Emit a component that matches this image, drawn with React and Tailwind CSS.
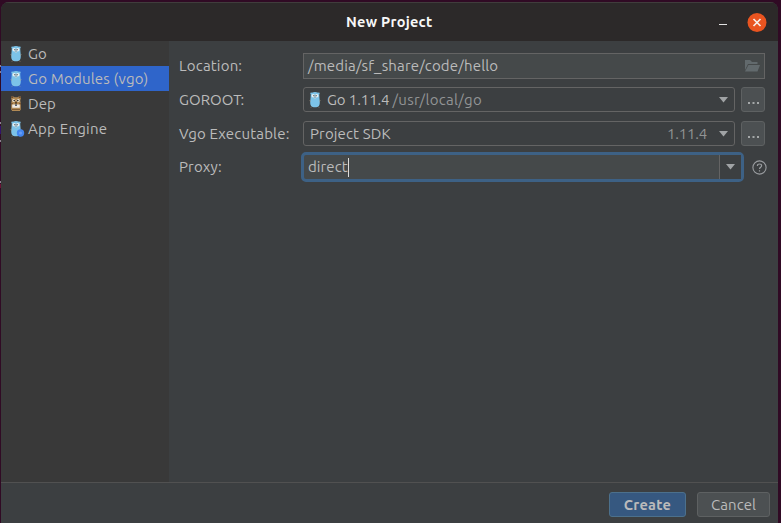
const FONT = "font-['Ubuntu','Noto_Sans',sans-serif]";

function Gopher({ badge = false }) {
  return (
    <svg width="12" height="16" viewBox="0 0 12 16" className="block shrink-0 overflow-visible">
      <path d="M.3 1.300C.3.5 1 .2 1.800.7 2.700.2 4 0 5 0s2.300.2 3.200.7C9 .2 9.700.5 9.700 1.300c0 .5-.3.8-.5 1.200.2 2 .2 4 .5 6 .2 2 .1 4-.7 5.300C8.300 15 6.700 15.300 5 15.300S1.700 15 1 13.800C.2 12.500.1 10.500.3 8.500c.3-2 .3-4 .5-6C.6 2.100.3 1.800.3 1.300Z" fill="#7cc3e8" />
      <path d="M.6 9.200-.3 8.700M9.400 9.200l.9-.5M1.700 14.800l-.6.6M8.300 14.800l.6.6" stroke="#b9a48b" strokeWidth=".9" />
      <circle cx="3.200" cy="3.700" r="1.700" fill="#e9eff1" />
      <circle cx="6.800" cy="3.700" r="1.700" fill="#e9eff1" />
      <circle cx="3.900" cy="3.700" r=".65" fill="#34434b" />
      <circle cx="6.100" cy="3.700" r=".65" fill="#34434b" />
      <path d="M4.300 5.300h1.400v1.100H4.300Z" fill="#d9d6cc" />
      <ellipse cx="5" cy="5" rx=".7" ry=".4" fill="#52606a" />
      {badge && <circle cx="9.500" cy="12" r="3.700" fill="#4285ee" />}
      {badge && <circle cx="9.500" cy="12" r="1.600" fill="#689df5" />}
    </svg>
  );
}

function DepIcon() {
  return (
    <svg width="12" height="16" viewBox="0 0 12 16" className="block shrink-0 overflow-visible">
      <path d="M.2.5h2l1.300.7h3L7.800.5h2v2l-.5 2 .5 3v6l-1 1.500H1.200l-1-1.500v-6l.5-3-.5-2Z" fill="#b18a55" />
      <path d="M.2.500h2v1.500h-2ZM7.800.500h2v1.500h-2ZM.2 7h1.500v1.500H.2ZM8.300 7h1.500v1.500H8.300ZM1 13h8v.8H1Z" fill="#6f4d2d" />
      <circle cx="2.800" cy="4.500" r="1.500" fill="#eee7d8" />
      <circle cx="7.200" cy="4.500" r="1.500" fill="#eee7d8" />
      <circle cx="3.200" cy="4.600" r=".8" fill="#282420" />
      <circle cx="6.800" cy="4.600" r=".8" fill="#282420" />
      <path d="M4.200 5.800h1.600v2H4.200Z" fill="#45331f" />
      <path d="M1.200 8.500h7.600v3.200H1.200Z" fill="#eeeae4" />
      <path d="M4 8.200h2v1.800H4Z" fill="#59616b" />
    </svg>
  );
}

function Arrow() {
  return (
    <svg width="9" height="6" viewBox="0 0 9 6" className="block shrink-0">
      <path d="M0 0h9L4.500 5.500Z" fill="#a0a3a5" />
    </svg>
  );
}

function SidebarItem({ icon, label, spacing, selected }) {
  return (
    <li className={`flex h-[25.2px] items-center pl-2.5 ${selected ? "bg-[#2f65ca]" : ""}`}>
      {icon}
      <span className={`ml-[5px] ${spacing}`}>{label}</span>
    </li>
  );
}

function MoreButton() {
  return (
    <button className="ml-1.5 flex h-[25px] w-6 items-center justify-center rounded-[3px] border border-[#5e6162] bg-[#4c5052]">
      <svg width="11" height="2" viewBox="0 0 11 2" className="mt-[7px]">
        <path d="M0 0h2v2H0ZM4.500 0h2v2h-2ZM9 0h2v2H9Z" fill="#a5a8a9" />
      </svg>
    </button>
  );
}

export default function App() {
  return (
    <div className={`flex h-[523px] w-[781px] overflow-hidden bg-[#300a24] ${FONT} text-[15px] leading-5 whitespace-nowrap text-[#bbbbbb]`}>
      <div className="flex w-px flex-col">
        <i className="mt-[65px] h-[2px] bg-[#8d8090]" />
        <i className="mt-1 h-[2px] bg-[#8d8090]" />
        <i className="mt-[49px] h-[2px] bg-[#8d8090]" />
        <i className="mt-[2px] h-2 bg-[#32116c]" />
        <i className="mt-[6px] h-[2px] bg-[#8d8090]" />
        <i className="mt-[39px] h-[2px] bg-[#8d8090]" />
        <i className="mt-px h-1 bg-[#6c1235]" />
      </div>
      <div className="mt-[2px] flex w-[777px] flex-col overflow-hidden rounded-t-[8px] bg-[#3c3f41]">
        <header className="flex h-[39px] shrink-0 items-center border-t border-[#403d3c] bg-[#2c2929] text-[#f7f7f7]">
          <h1 className="ml-[345px] w-[86px] text-[14.5px] font-bold tracking-[0.28px]">New Project</h1>
          <div className="mt-[4px] ml-[287px] h-px w-2 bg-[#e2e2e2]" />
          <button className="mt-px ml-[20px]">
            <svg width="20" height="20" viewBox="0 0 20 20" className="block">
              <circle cx="10" cy="9.500" r="9.500" fill="#e95420" />
              <path d="m6.500 6 7 7m0-7-7 7" stroke="#f8eee9" strokeWidth="1.700" />
            </svg>
          </button>
        </header>
        <div className="flex h-[441px] shrink-0">
          <ul className="w-[168px] bg-[#393939]">
            <SidebarItem icon={<Gopher />} label="Go" spacing="tracking-[0.1px]" />
            <SidebarItem icon={<Gopher />} label="Go Modules (vgo)" spacing="tracking-[0.19px]" selected />
            <SidebarItem icon={<DepIcon />} label="Dep" spacing="tracking-[0.1px]" />
            <SidebarItem icon={<Gopher badge />} label="App Engine" spacing="tracking-[0.25px]" />
          </ul>
          <main className="flex-1 pt-3 pl-2.5">
            <div className="mb-2 flex h-[26px] items-center">
              <label className="w-[124px] tracking-[0.18px]">Location:</label>
              <div className="flex h-full w-[462px] items-center border border-[#646464] bg-[#45494a] pl-1">
                <span className="tracking-[0.17px]">/media/sf_share/code/hello</span>
                <svg width="15" height="12" viewBox="0 0 15 12" className="mr-[4px] ml-auto">
                  <path d="M0 0h5l2 2h5.500v2H3L0 10Z" fill="#626a6d" />
                  <path d="M3.400 5H15l-2.500 6.500H0Z" fill="#626a6d" />
                </svg>
              </div>
            </div>
            <div className="mb-[9px] flex h-[25px] items-center">
              <label className="w-[124px] tracking-[0.05px]">GOROOT:</label>
              <div className="flex h-full w-[432px] items-center rounded-[3px] border border-[#646464] pr-[6px] pl-1.5">
                <Gopher />
                <span className="ml-[5px] tracking-[-0.1px]">Go 1.11.4</span>
                <span className="ml-[3px] tracking-[0.33px] text-[#929495]">/usr/local/go</span>
                <span className="ml-auto"><Arrow /></span>
              </div>
              <MoreButton />
            </div>
            <div className="mb-1.5 flex h-[25px] items-center">
              <label className="w-[124px] tracking-[0.18px]">Vgo Executable:</label>
              <div className="flex h-full w-[432px] items-center rounded-[3px] border border-[#646464] pr-[6px] pl-1.5">
                <span className="tracking-[0.13px]">Project SDK</span>
                <span className="mr-[12px] ml-auto tracking-[-0.2px] text-[#929495]">1.11.4</span>
                <Arrow />
              </div>
              <MoreButton />
            </div>
            <div className="flex h-[30px] items-center">
              <label className="w-[122px] tracking-[0.15px]">Proxy:</label>
              <div className="flex h-full w-[443px] rounded-[5px] border-[3px] border-[#3d6185] bg-[#45494a]">
                <div className="flex w-[415px] items-center pl-1">
                  <span className="tracking-[0.08px]">direct</span>
                  <i className="h-[19px] w-px bg-[#dddddd]" />
                </div>
                <div className="flex flex-1 items-center justify-center border-l border-[#646464] bg-[#3c3f41]"><Arrow /></div>
              </div>
              <svg width="15" height="15" viewBox="0 0 15 15" className="ml-2 block" fill="none" stroke="#9a9da0">
                <circle cx="7.500" cy="7.500" r="6.600" strokeWidth="1.100" />
                <path d="M5.400 6c0-1.300.8-2 2.100-2s2.100.7 2.100 1.800C9.600 7.300 7.500 7.100 7.500 9M7.500 10.200v1.300" strokeWidth="1.200" />
              </svg>
            </div>
          </main>
        </div>
        <footer className="flex flex-1 items-start justify-end border-t border-[#515151] pt-[9px] pr-2">
          <button className="h-[25px] w-[77px] rounded-[3px] border border-[#4c708c] bg-[#365880] text-[14.5px] font-bold tracking-[0.3px]">Create</button>
          <button className="ml-[11px] h-[25px] w-[73px] rounded-[3px] border border-[#5e6162] bg-[#4c5052] tracking-[0.05px]">Cancel</button>
        </footer>
      </div>
    </div>
  );
}
